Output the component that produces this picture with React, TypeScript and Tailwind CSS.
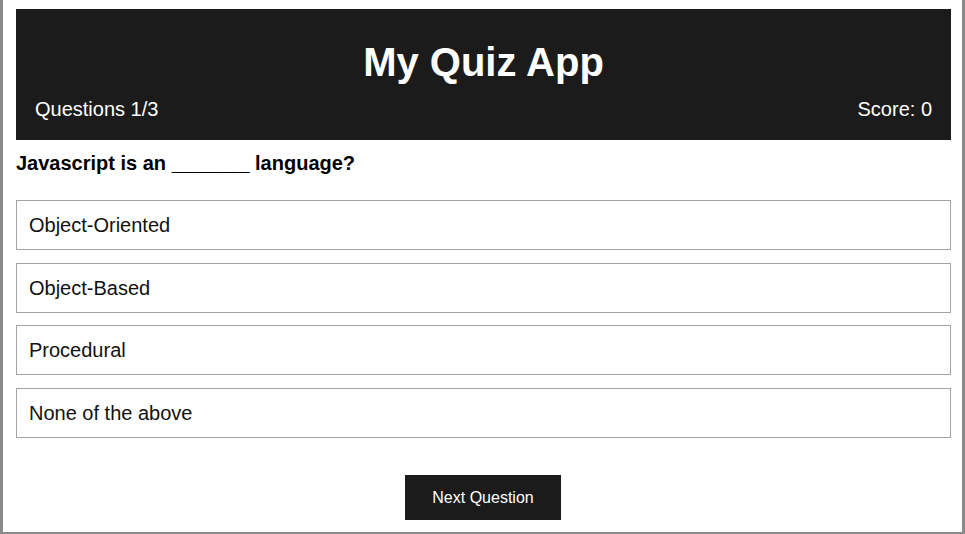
import React from "react";

const options = ["Object-Oriented", "Object-Based", "Procedural", "None of the above"];

export default function App() {
  return (
    <div
      className="w-[965px] h-[534px] bg-white border-l-[3px] border-r-[3px] border-b-[2px] border-[#8a8a8a] pl-[13px] pr-[11px] pt-[9px] box-border overflow-hidden"
      style={{ fontFamily: '"Liberation Sans", Arial, sans-serif' }}
    >
      <div className="bg-[#1b1b1b] text-white pt-[30px] pb-[19px] px-[19px]">
        <h1 className="text-center text-[40px] leading-[46px] font-bold">My Quiz App</h1>
        <div className="mt-[13px] flex justify-between text-[20px] leading-[23px]">
          <span>Questions 1/3</span>
          <span>Score: 0</span>
        </div>
      </div>
      <div className="mt-[12px] text-[20px] leading-[23px] font-bold text-black">
        Javascript is an _______ language?
      </div>
      <div className="mt-[25px] flex flex-col gap-[12.5px]">
        {options.map((o) => (
          <div
            key={o}
            className="h-[50px] border border-[#a3a3a3] flex items-center px-[12px] text-[20px] text-[#111]"
          >
            {o}
          </div>
        ))}
      </div>
      <div className="mt-[37px] flex justify-center">
        <button className="mr-[1px] w-[156px] h-[45px] pt-[1px] bg-[#1b1b1b] text-white text-[16px]">Next Question</button>
      </div>
    </div>
  );
}
